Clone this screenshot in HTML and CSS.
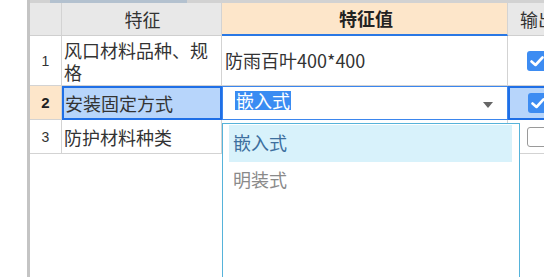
FILE: index.html
```html
<!DOCTYPE html>
<html lang="zh">
<head>
<meta charset="utf-8">
<title>特征</title>
<link rel="stylesheet" href="styles.css">
</head>
<body>
<div class="page">
  <div class="gutter"></div>
  <div class="frame">
    <div class="topstrip"><span class="topgap"></span><span class="topthumb"></span></div>
    <div class="grid">
      <div class="cell hd num"></div>
      <div class="cell hd c2">特征</div>
      <div class="cell hd c3 active">特征值</div>
      <div class="cell hd c4">输出</div>

      <div class="cell num tall">1</div>
      <div class="cell c2 tall"><span class="wrap">风口材料品种、规格</span></div>
      <div class="cell c3 tall">防雨百叶400*400</div>
      <div class="cell c4 tall"><span class="chk on"><svg viewBox="0 0 20 20" width="20" height="20"><path d="M4.5 10.5 L8.5 14 L15.5 6.5" fill="none" stroke="#fff" stroke-width="2.6" stroke-linecap="round" stroke-linejoin="round"/></svg></span></div>

      <div class="cell num cur">2</div>
      <div class="cell c2 sel">安装固定方式</div>
      <div class="cell c3 editor"><span class="hl">嵌入式</span><span class="arrow"></span></div>
      <div class="cell c4 sel"><span class="chk on"><svg viewBox="0 0 20 20" width="20" height="20"><path d="M4.5 10.5 L8.5 14 L15.5 6.5" fill="none" stroke="#fff" stroke-width="2.6" stroke-linecap="round" stroke-linejoin="round"/></svg></span></div>

      <div class="cell num">3</div>
      <div class="cell c2">防护材料种类</div>
      <div class="cell c3"></div>
      <div class="cell c4"><span class="chk"></span></div>

      <ul class="dropdown">
        <li class="opt hot">嵌入式</li>
        <li class="opt">明装式</li>
      </ul>
    </div>
  </div>
</div>
</body>
</html>
```

FILE: styles.css
```css
* { box-sizing: border-box; }
html, body { margin: 0; padding: 0; background: #fff; }
body {
  width: 544px;
  height: 277px;
  overflow: hidden;
  font-family: "Noto Sans CJK SC", "Microsoft YaHei", sans-serif;
  color: #222;
}
.page {
  display: flex;
  height: 277px;
}
.gutter {
  width: 27px;
  flex: none;
  background: #fff;
}
.frame {
  flex: none;
  width: 517px;
  height: 277px;
  overflow: hidden;
  border-left: 3px solid #c4c4c4;
  display: flex;
  flex-direction: column;
}
.topstrip {
  height: 3px;
  flex: none;
  background: #d2d2d2;
  display: flex;
}
.topgap { width: 20px; }
.topthumb { width: 137px; background: #b3c1cf; }
.grid {
  position: relative;
  flex: 1;
  display: grid;
  grid-template-columns: 32px 160px 286px 36px;
  grid-template-rows: 33px 50px 34px 34px;
  align-content: start;
}
.cell {
  border-right: 1px solid #d3d3d3;
  border-bottom: 1px solid #d3d3d3;
  display: flex;
  align-items: center;
  font-size: 18px;
  line-height: 22px;
  white-space: nowrap;
  overflow: hidden;
}
.hd {
  background: #e8e8e8;
  border-bottom-color: #cfcfcf;
  justify-content: center;
  color: #333;
}
.hd.active {
  background: #fde6ca;
  border-bottom: 2px solid #2a78e4;
  font-weight: bold;
  color: #222;
}
.hd.c4 { justify-content: flex-start; padding-left: 12px; }
.num {
  justify-content: center;
  font-family: "Liberation Sans", Arial, sans-serif;
  font-size: 14px;
  color: #333;
}
.num.cur {
  background: #fde6ca;
  font-weight: bold;
  font-size: 15px;
  color: #222;
}
.c2 { padding-left: 2px; color: #333; }
.c3 { padding-left: 3px; color: #333; padding-bottom: 2px; }
.wrap { white-space: normal; width: 150px; }
.c4 { padding-left: 19px; border-right: none; }
.sel {
  background: #b7d5fb;
  border: 2px solid #1f6fe6;
}
.c2.sel { padding-left: 1px; }
.c4.sel { padding-left: 18px; border-right: none; }
.editor {
  border: 1px solid #3b86ee;
  padding-left: 12px;
  padding-bottom: 6px;
  position: relative;
}
.hl {
  background: #3a8cf2;
  color: #fff;
  line-height: 19px;
  padding: 0 1px;
}
.arrow {
  position: absolute;
  right: 14px;
  top: 15px;
  width: 0;
  height: 0;
  border-left: 5px solid transparent;
  border-right: 5px solid transparent;
  border-top: 6px solid #666;
}
.chk {
  width: 20px;
  height: 20px;
  border-radius: 3px;
  border: 1px solid #9a9a9a;
  background: #fff;
  display: block;
  flex: none;
}
.chk.on {
  background: #3d8cf2;
  border: none;
}
.chk svg { display: block; }
.dropdown {
  position: absolute;
  left: 192px;
  top: 120px;
  width: 298px;
  height: 154px;
  margin: 0;
  padding: 1px 7px 0 6px;
  list-style: none;
  background: #fff;
  border: 1px solid #56b3da;
  border-bottom: none;
}
.opt {
  height: 37px;
  display: flex;
  align-items: center;
  padding-left: 4px;
  padding-bottom: 3px;
  font-size: 18px;
  color: #8a8a8a;
}
.opt.hot {
  background: #d8f2fb;
  color: #3d6f9e;
}
```
